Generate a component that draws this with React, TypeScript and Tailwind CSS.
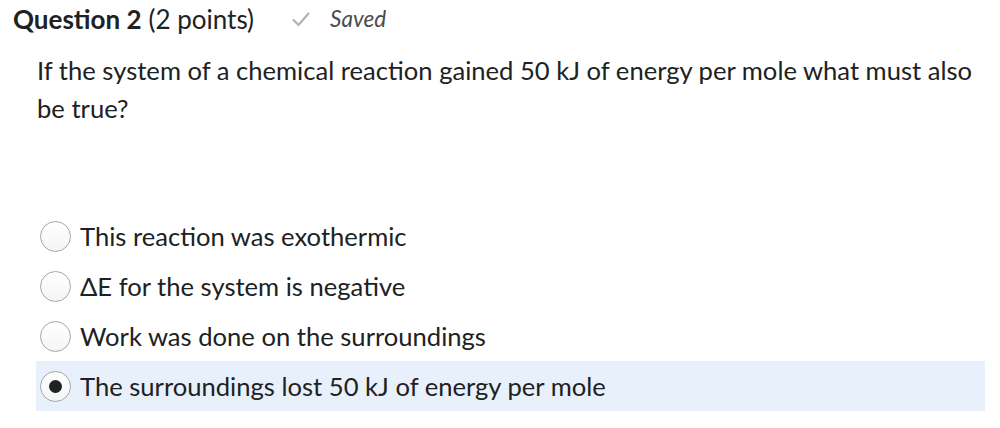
import React, { useState } from "react";

const options = [
  "This reaction was exothermic",
  "ΔE for the system is negative",
  "Work was done on the surroundings",
  "The surroundings lost 50 kJ of energy per mole",
];

export default function App() {
  const [selected, setSelected] = useState(3);

  return (
    <div
      className="w-[1000px] h-[428px] bg-white text-[#202122] overflow-hidden"
      style={{ fontFamily: "Lato, 'Open Sans', sans-serif" }}
    >
      {/* header */}
      <div className="flex items-center pl-[13px] h-[38px]">
        <span className="text-[26px] font-bold">Question 2</span>
        <span className="text-[26px] ml-[7px]">(2 points)</span>
        <svg
          className="ml-[38px]"
          width="18"
          height="15"
          viewBox="0 0 18 15"
          fill="none"
        >
          <path
            d="M1.5 8 L6.5 13 L16.5 1.5"
            stroke="#b1b4b7"
            strokeWidth="2.2"
            strokeLinecap="round"
            strokeLinejoin="round"
          />
        </svg>
        <span className="ml-[20px] text-[22.5px] italic text-[#494c4e]">
          Saved
        </span>
      </div>

      {/* question text */}
      <div className="pl-[37px] pr-[20px] pt-[13px] text-[25.6px] leading-[38px]">
        If the system of a chemical reaction gained 50 kJ of energy per mole
        what must also be true?
      </div>

      {/* options */}
      <div className="mt-[84px] pl-[36px] pr-[15px] flex flex-col">
        {options.map((opt, i) => (
          <label
            key={i}
            onClick={() => setSelected(i)}
            className={`flex items-center h-[50px] cursor-pointer ${
              selected === i ? "bg-[#e8f1fb]" : ""
            }`}
          >
            <span className="ml-[4px] w-[31px] h-[31px] rounded-full border-[1.5px] border-[#a4a7aa] bg-gradient-to-b from-white to-[#f4f5f6] flex items-center justify-center shrink-0">
              {selected === i && (
                <span className="w-[13px] h-[13px] rounded-full bg-[#202122]" />
              )}
            </span>
            <span className="ml-[9px] text-[25.6px]">{opt}</span>
          </label>
        ))}
      </div>
    </div>
  );
}
